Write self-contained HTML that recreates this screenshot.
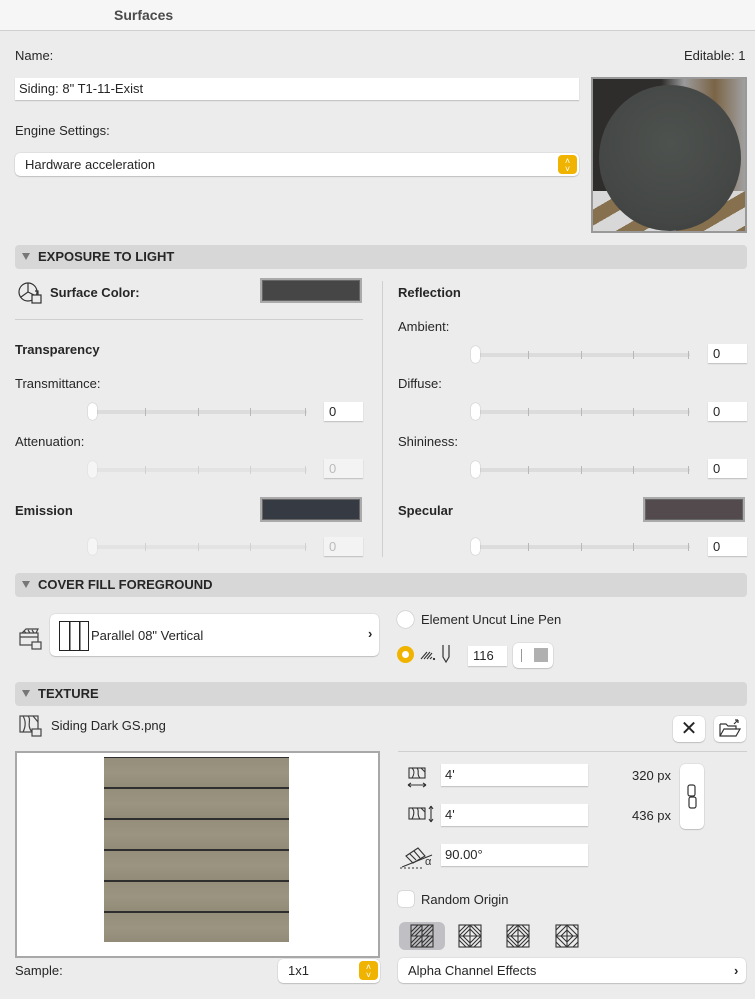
<!DOCTYPE html>
<html><head><meta charset="utf-8">
<style>
*{margin:0;padding:0;box-sizing:border-box}
body{width:755px;height:999px;background:#ececec;font-family:"Liberation Sans",sans-serif;font-size:13px;color:#262626;position:relative;overflow:hidden}
.a{position:absolute}
.hdr{left:15px;width:732px;height:24px;background:#d7d7d7;border-radius:4px;font-weight:bold;font-size:13px;line-height:24px;padding-left:23px}
.hdr:before{content:"";position:absolute;left:7px;top:8px;border-left:4px solid transparent;border-right:4px solid transparent;border-top:7px solid #777}
.inp{background:#fff;box-shadow:0 1px 1px rgba(0,0,0,.2);height:22px;line-height:22px;padding-left:4px}
.val{background:#fff;width:39px;height:19px;line-height:19px;padding-left:5px;box-shadow:0 1px 1px rgba(0,0,0,.2)}
.dis{background:#f3f3f3;color:#bbb}
.trk{height:4px;background:#dcdcdc;border-radius:2px}
.tk{width:1px;height:8px;background:#b8b8b8;top:-2px}
.th{width:9px;height:17px;background:#fff;border-radius:5px;box-shadow:0 0 1px rgba(0,0,0,.4);top:-7px}
.b{font-weight:bold}
.sw{width:102px;height:25px;border:2px solid #aaa;box-shadow:inset 0 0 0 1px #666}
.btn{background:#fff;border-radius:5px;box-shadow:0 0 1px rgba(0,0,0,.3),0 1px 1px rgba(0,0,0,.15)}
.yb{width:19px;height:19px;background:#f0b400;border-radius:4px;color:#fff;font-size:9px;text-align:center;line-height:8px;padding-top:2px}
</style></head><body>
<div class="a" style="left:0;top:0;width:755px;height:31px;background:#f6f6f6;border-bottom:1px solid #d0d0d0"></div>
<div class="a b" style="left:114px;top:7px;font-size:14px;color:#4a4a4a">Surfaces</div>
<div class="a" style="left:15px;top:48px">Name:</div>
<div class="a" style="left:684px;top:48px">Editable: 1</div>
<div class="a inp" style="left:15px;top:78px;width:564px">Siding: 8" T1-11-Exist</div>
<div class="a" style="left:15px;top:123px">Engine Settings:</div>
<div class="a inp btn" style="left:15px;top:153px;width:564px;height:23px;padding-left:10px;line-height:23px">Hardware acceleration</div>
<div class="a yb" style="left:558px;top:155px">˄<br>˅</div>
<div class="a" style="left:591px;top:77px;width:156px;height:156px;border:2px solid #999;background:#7b7e7e;overflow:hidden">
<div class="a" style="left:0;top:0;width:152px;height:152px;background:linear-gradient(90deg,#2e2d2b 0,#2e2d2b 45%,#9a9a9a 60%,#7b6446 80%,#a0a0a0 100%)"></div>
<div class="a" style="left:0;top:112px;width:152px;height:40px;background:repeating-linear-gradient(150deg,#d8d8d8 0 16px,#86704e 16px 30px)"></div>
<div class="a" style="left:6px;top:6px;width:142px;height:146px;border-radius:50%;background:radial-gradient(circle at 50% 40%,#4e524f,#434644 70%,#383b38);"></div>
</div>

<div class="a hdr" style="top:245px">EXPOSURE TO LIGHT</div>
<svg class="a" style="left:18px;top:281px" width="26" height="24" viewBox="0 0 26 24" fill="none" stroke="#333" stroke-width="1.2"><circle cx="10" cy="11" r="9"/><path d="M10 2v9l-7 5M10 11l6 3"/><rect x="14" y="14" width="9" height="8" fill="#ececec"/><path d="M17 10h3v4"/></svg>
<div class="a b" style="left:50px;top:285px">Surface Color:</div>
<div class="a sw" style="left:260px;top:278px;background:#464646"></div>
<div class="a" style="left:15px;top:319px;width:348px;height:1px;background:#cfcfcf"></div>
<div class="a b" style="left:15px;top:342px">Transparency</div>
<div class="a" style="left:15px;top:376px">Transmittance:</div>
<div class="a" style="left:15px;top:434px">Attenuation:</div>
<div class="a b" style="left:15px;top:503px">Emission</div>
<div class="a sw" style="left:260px;top:497px;background:#363a42"></div>
<div class="a" style="left:382px;top:281px;width:1px;height:276px;background:#cfcfcf"></div>
<div class="a b" style="left:398px;top:285px">Reflection</div>
<div class="a" style="left:398px;top:319px">Ambient:</div>
<div class="a" style="left:398px;top:376px">Diffuse:</div>
<div class="a" style="left:398px;top:434px">Shininess:</div>
<div class="a b" style="left:398px;top:503px">Specular</div>
<div class="a sw" style="left:643px;top:497px;background:#524a4c"></div>

<div class="a trk" style="left:90px;top:410px;width:217px"><div class="a tk" style="left:55px"></div><div class="a tk" style="left:108px"></div><div class="a tk" style="left:160px"></div><div class="a tk" style="left:215px"></div><div class="a th" style="left:-2px"></div></div>
<div class="a val" style="left:324px;top:402px">0</div>
<div class="a trk" style="left:90px;top:468px;width:217px;opacity:.5"><div class="a tk" style="left:55px"></div><div class="a tk" style="left:108px"></div><div class="a tk" style="left:160px"></div><div class="a tk" style="left:215px"></div><div class="a th" style="left:-2px"></div></div>
<div class="a val dis" style="left:324px;top:459px">0</div>
<div class="a trk" style="left:90px;top:545px;width:217px;opacity:.5"><div class="a tk" style="left:55px"></div><div class="a tk" style="left:108px"></div><div class="a tk" style="left:160px"></div><div class="a tk" style="left:215px"></div><div class="a th" style="left:-2px"></div></div>
<div class="a val dis" style="left:324px;top:537px">0</div>

<div class="a trk" style="left:473px;top:353px;width:217px"><div class="a tk" style="left:55px"></div><div class="a tk" style="left:108px"></div><div class="a tk" style="left:160px"></div><div class="a tk" style="left:215px"></div><div class="a th" style="left:-2px"></div></div>
<div class="a val" style="left:708px;top:344px">0</div>
<div class="a trk" style="left:473px;top:410px;width:217px"><div class="a tk" style="left:55px"></div><div class="a tk" style="left:108px"></div><div class="a tk" style="left:160px"></div><div class="a tk" style="left:215px"></div><div class="a th" style="left:-2px"></div></div>
<div class="a val" style="left:708px;top:402px">0</div>
<div class="a trk" style="left:473px;top:468px;width:217px"><div class="a tk" style="left:55px"></div><div class="a tk" style="left:108px"></div><div class="a tk" style="left:160px"></div><div class="a tk" style="left:215px"></div><div class="a th" style="left:-2px"></div></div>
<div class="a val" style="left:708px;top:459px">0</div>
<div class="a trk" style="left:473px;top:545px;width:217px"><div class="a tk" style="left:55px"></div><div class="a tk" style="left:108px"></div><div class="a tk" style="left:160px"></div><div class="a tk" style="left:215px"></div><div class="a th" style="left:-2px"></div></div>
<div class="a val" style="left:708px;top:537px">0</div>

<div class="a hdr" style="top:573px">COVER FILL FOREGROUND</div>
<svg class="a" style="left:18px;top:627px" width="26" height="24" viewBox="0 0 26 24" fill="none" stroke="#444" stroke-width="1.2"><rect x="2" y="6" width="18" height="12"/><path d="M4 6l4-4h12l-2 4M6 4l2 2M10 3l2 3M14 3l2 3M2 10h18"/><rect x="14" y="15" width="9" height="7" fill="#ececec"/></svg>
<div class="a btn" style="left:50px;top:614px;width:329px;height:42px"></div>
<div class="a" style="left:59px;top:621px;width:30px;height:30px;border:1.5px solid #222;background:linear-gradient(90deg,transparent 9px,#222 9px,#222 10.5px,transparent 10.5px,transparent 19px,#222 19px,#222 20.5px,transparent 20.5px)"></div>
<div class="a" style="left:91px;top:628px">Parallel 08" Vertical</div>
<div class="a b" style="left:368px;top:626px">›</div>
<div class="a" style="left:397px;top:611px;width:17px;height:17px;border-radius:50%;background:#fff;box-shadow:0 0 1px rgba(0,0,0,.5)"></div>
<div class="a" style="left:421px;top:612px">Element Uncut Line Pen</div>
<div class="a" style="left:397px;top:646px;width:17px;height:17px;border-radius:50%;background:#f0b400"><div class="a" style="left:5px;top:5px;width:7px;height:7px;border-radius:50%;background:#fff"></div></div>
<svg class="a" style="left:419px;top:646px" width="18" height="18" viewBox="0 0 18 18" fill="none" stroke="#333" stroke-width="1.1"><path d="M2 13l6-7M5 13l6-7M8 13l5-6M11 13l2-2"/><circle cx="15" cy="13" r=".6" fill="#333"/></svg>
<svg class="a" style="left:439px;top:644px" width="14" height="20" viewBox="0 0 14 20" fill="none" stroke="#333" stroke-width="1.2"><path d="M4 1v12l3 5 3-5V1"/></svg>
<div class="a val" style="left:468px;top:646px;height:20px">116</div>
<div class="a btn" style="left:513px;top:643px;width:40px;height:25px"><div class="a" style="left:8px;top:6px;width:1px;height:13px;background:#999"></div><div class="a" style="left:21px;top:5px;width:14px;height:14px;background:#b0b0b0"></div></div>

<div class="a hdr" style="top:682px">TEXTURE</div>
<svg class="a" style="left:18px;top:714px" width="26" height="24" viewBox="0 0 26 24" fill="none" stroke="#444" stroke-width="1.2"><rect x="2" y="2" width="18" height="16"/><path d="M5 2c3 5 3 10 0 16M10 2c4 4-2 9 4 16M15 2l5 6"/><rect x="14" y="15" width="9" height="7" fill="#ececec"/></svg>
<div class="a" style="left:51px;top:718px">Siding Dark GS.png</div>
<div class="a btn" style="left:673px;top:716px;width:32px;height:26px;text-align:center;font-size:20px;line-height:26px">✕</div>
<svg class="a btn" style="left:714px;top:716px" width="32" height="26" viewBox="0 0 32 26" fill="none" stroke="#333" stroke-width="1.2"><path d="M6 8h6l2 2h8v3M6 8v12h16l4-7H10l-4 7M20 8l4-4m0 0v3m0-3h-3"/></svg>

<div class="a" style="left:15px;top:751px;width:365px;height:207px;background:#fff;border:2px solid #a8a8a8"></div>
<div class="a" style="left:104px;top:757px;width:185px;height:185px;background:repeating-linear-gradient(180deg,#948e7b 0,#9a9480 15px,#918b78 29px,#2e2e2e 29px,#2e2e2e 31px);background-position:0 1px"></div>
<div class="a" style="left:15px;top:963px">Sample:</div>
<div class="a btn" style="left:278px;top:959px;width:102px;height:24px;padding-left:10px;line-height:24px">1x1</div>
<div class="a yb" style="left:359px;top:961px">˄<br>˅</div>

<div class="a" style="left:398px;top:751px;width:349px;height:1px;background:#cfcfcf"></div>
<svg class="a" style="left:407px;top:766px" width="22" height="24" viewBox="0 0 22 24" fill="none" stroke="#333" stroke-width="1.1"><rect x="2" y="2" width="16" height="10"/><path d="M5 2c3 3 2 7 0 10M10 2c3 3-1 6 3 10M14 2l4 4M1 19h18M1 19l3-2M1 19l3 2M19 19l-3-2M19 19l-3 2"/></svg>
<div class="a inp" style="left:441px;top:764px;width:147px;padding-left:4px">4'</div>
<div class="a" style="left:632px;top:768px">320 px</div>
<svg class="a" style="left:407px;top:805px" width="30" height="18" viewBox="0 0 30 18" fill="none" stroke="#333" stroke-width="1.1"><rect x="2" y="3" width="16" height="11"/><path d="M5 3c3 3 2 7 0 11M10 3c3 3-1 6 3 11M14 3l4 4M24 1v16M24 1l-2 3M24 1l2 3M24 17l-2-3M24 17l2-3"/></svg>
<div class="a inp" style="left:441px;top:804px;width:147px">4'</div>
<div class="a" style="left:632px;top:808px">436 px</div>
<div class="a btn" style="left:680px;top:764px;width:24px;height:65px"></div>
<svg class="a" style="left:685px;top:783px" width="14" height="28" viewBox="0 0 14 28" fill="none" stroke="#333" stroke-width="1.2"><rect x="3" y="2" width="7" height="11" rx="2"/><rect x="4" y="14" width="7" height="11" rx="2"/></svg>
<svg class="a" style="left:398px;top:842px" width="40" height="28" viewBox="0 0 40 28" fill="none" stroke="#333" stroke-width="1.1"><path d="M8 14l12-8 7 8-12 7zM12 12l6 6M16 9l6 7"/><path d="M2 26h24" stroke-dasharray="2 2"/><path d="M4 25l30-12"/><text x="27" y="23" font-size="11" fill="#333" stroke="none" font-family="Liberation Sans">α</text></svg>
<div class="a inp" style="left:441px;top:844px;width:147px">90.00°</div>
<div class="a" style="left:398px;top:891px;width:16px;height:16px;border-radius:4px;background:#fff;box-shadow:0 0 1px rgba(0,0,0,.5)"></div>
<div class="a" style="left:421px;top:892px">Random Origin</div>
<div class="a" style="left:399px;top:922px;width:46px;height:28px;background:#c0c0c4;border-radius:6px"></div>
<svg class="a" style="left:410px;top:924px" width="24" height="24" viewBox="0 0 24 24" fill="none" stroke="#333" stroke-width="1.1"><rect x="1" y="1" width="22" height="22"/><path d="M1 12h22M12 1v22M1 8l7-7M1 12l11-11M5 12l7-7M12 8l7-7M12 12l11-11M16 12l7-7M1 19l7-7M1 23l11-11M5 23l7-7M12 19l7-7M12 23l11-11M16 23l7-7"/></svg>
<svg class="a" style="left:458px;top:924px" width="24" height="24" viewBox="0 0 24 24" fill="none" stroke="#333" stroke-width="1.1"><rect x="1" y="1" width="22" height="22"/><path d="M1 12h22M12 1v22M1 8l7-7M1 12l11-11M5 12l7-7M23 8l-7-7M23 12l-11-11M19 12l-7-7M1 16l7 7M1 12l11 11M5 12l7 7M23 16l-7 7M23 12l-11 11M19 12l-7 7"/></svg>
<svg class="a" style="left:506px;top:924px" width="24" height="24" viewBox="0 0 24 24" fill="none" stroke="#333" stroke-width="1.1"><rect x="1" y="1" width="22" height="22"/><path d="M1 12h22M12 1v22M1 8l7-7M1 12l11-11M5 12l7-7M23 8l-7-7M23 12l-11-11M19 12l-7-7M1 16l7 7M1 12l11 11M5 12l7 7M12 19l7-7M12 23l11-11M16 23l7-7"/></svg>
<svg class="a" style="left:555px;top:924px" width="24" height="24" viewBox="0 0 24 24" fill="none" stroke="#333" stroke-width="1.1"><rect x="1" y="1" width="22" height="22"/><path d="M1 12h22M12 1v22M12 1l11 11-11 11L1 12zM6 1L1 6M18 1l5 5M6 23l-5-5M18 23l5-5M12 6l6 6-6 6-6-6z"/></svg>
<div class="a btn" style="left:398px;top:958px;width:348px;height:25px;padding-left:10px;line-height:25px">Alpha Channel Effects</div>
<div class="a b" style="left:734px;top:963px">›</div>
</body></html>
